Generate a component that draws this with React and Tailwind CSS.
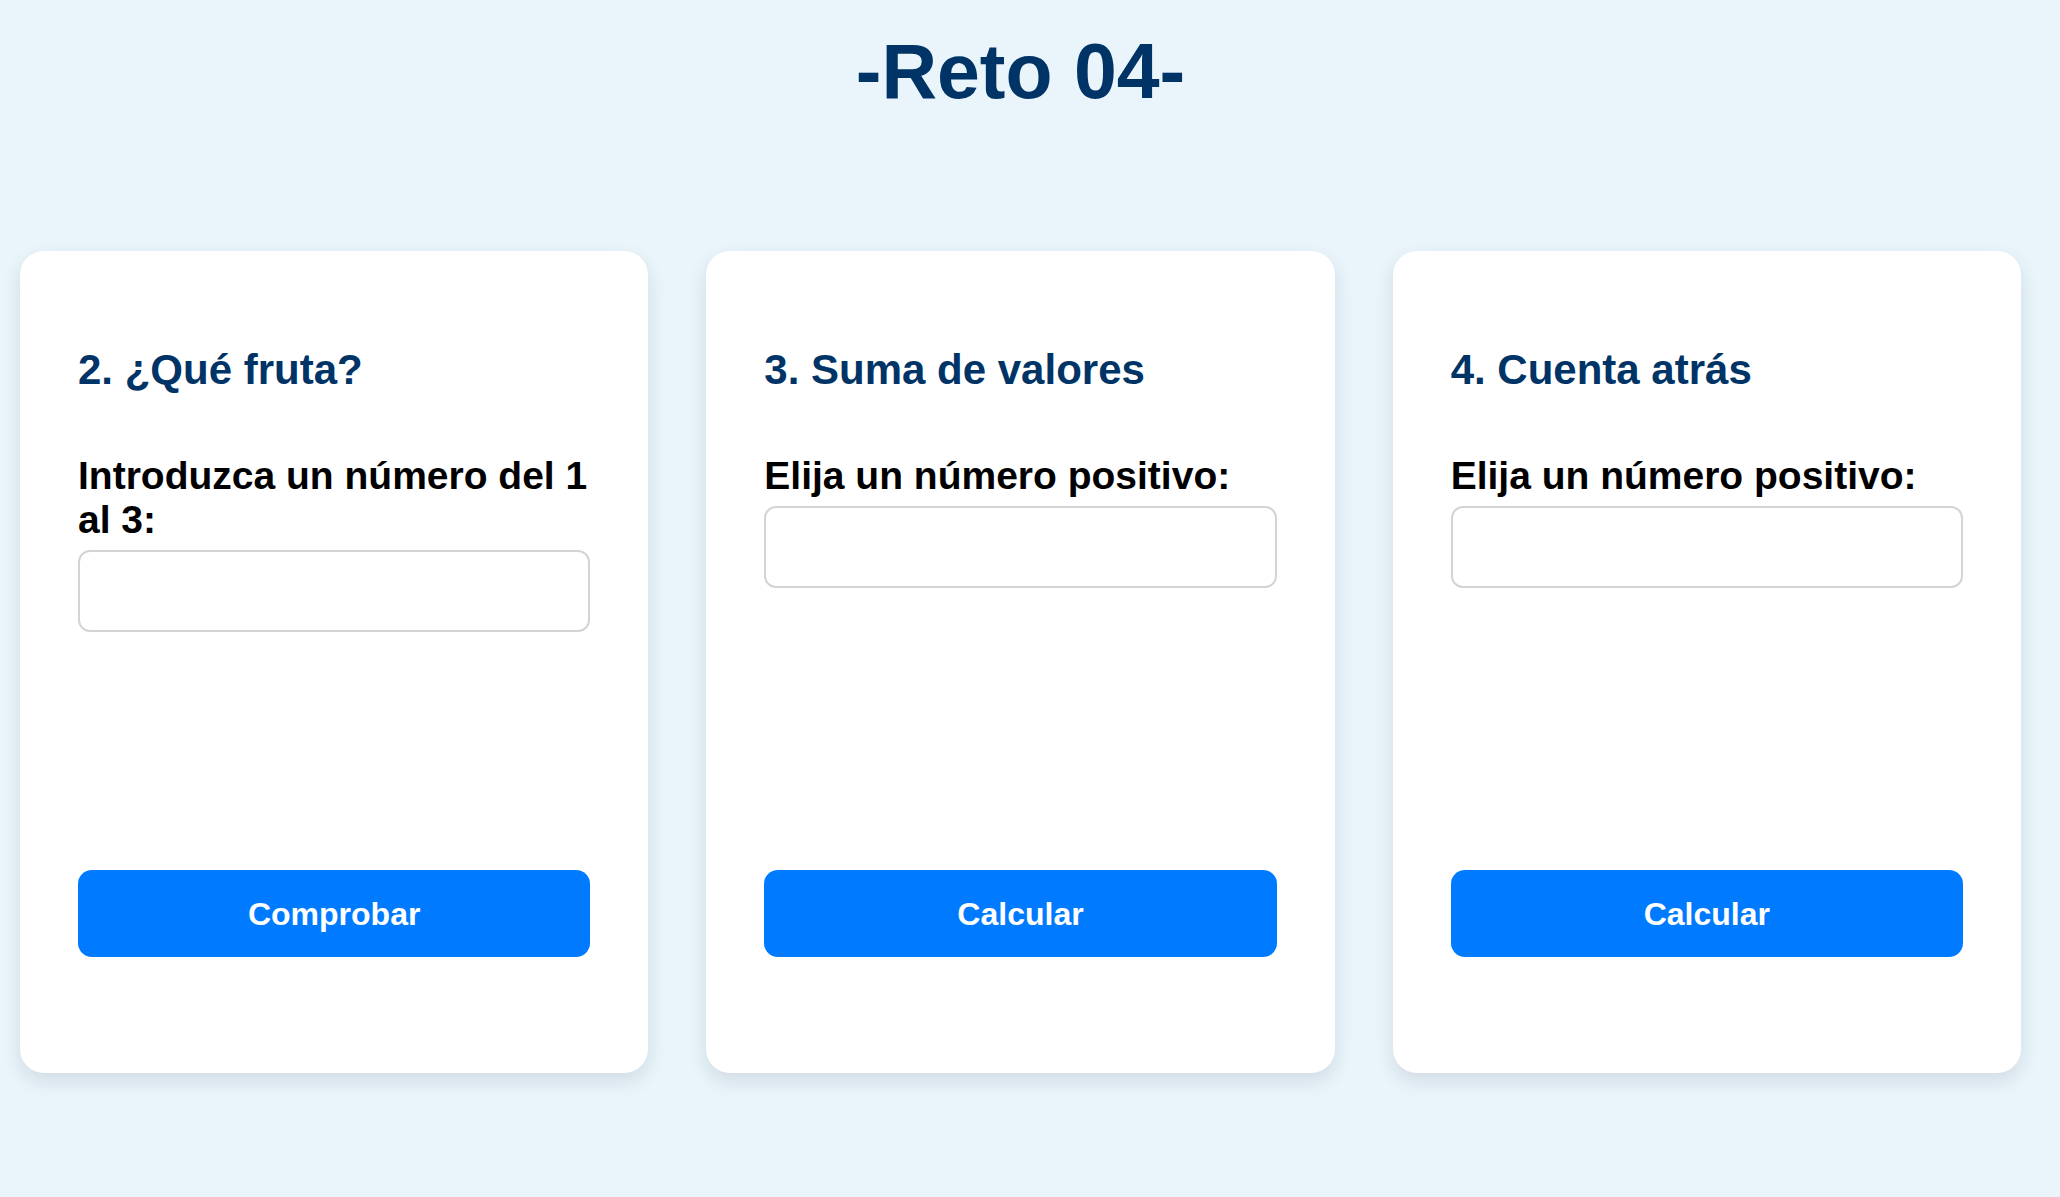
const cards = [
  { id: "fruta", title: "2. ¿Qué fruta?", label: "Introduzca un número del 1 al 3:", action: "Comprobar" },
  { id: "suma", title: "3. Suma de valores", label: "Elija un número positivo:", action: "Calcular" },
  { id: "cuenta", title: "4. Cuenta atrás", label: "Elija un número positivo:", action: "Calcular" },
];

function Card({ id, title, label, action }) {
  return (
    <section className="flex flex-col rounded-3xl bg-white px-[58px] pt-[92px] pb-[116px] shadow-[0_8px_20px_rgba(20,0,40,0.11)]">
      <h2 className="text-[42px] leading-[54px] font-bold text-[#003366]">{title}</h2>
      <label htmlFor={id} className="mt-[57px] text-[39px] leading-[44px] font-bold text-black">{label}</label>
      <input id={id} type="text" className="mt-2 h-[82px] w-full rounded-xl border-2 border-[#d4d4d4] bg-white px-5 text-[32px] outline-none" />
      <div className="min-h-[238px] grow" />
      <button type="button" className="h-[87px] rounded-[14px] bg-[#007bff] text-[32px] font-bold text-white">{action}</button>
    </section>
  );
}

export default function App() {
  return (
    <main className="min-h-screen bg-[#e9f5fb] pt-[27px] pr-[39px] pb-[123px] pl-5 font-['Liberation_Sans',Arial,sans-serif]">
      <h1 className="text-center text-[77px] leading-[88px] font-bold text-[#003366]">-Reto 04-</h1>
      <div className="mt-[136px] grid grid-cols-3 gap-[58px]">
        {cards.map((card) => <Card key={card.id} {...card} />)}
      </div>
    </main>
  );
}
